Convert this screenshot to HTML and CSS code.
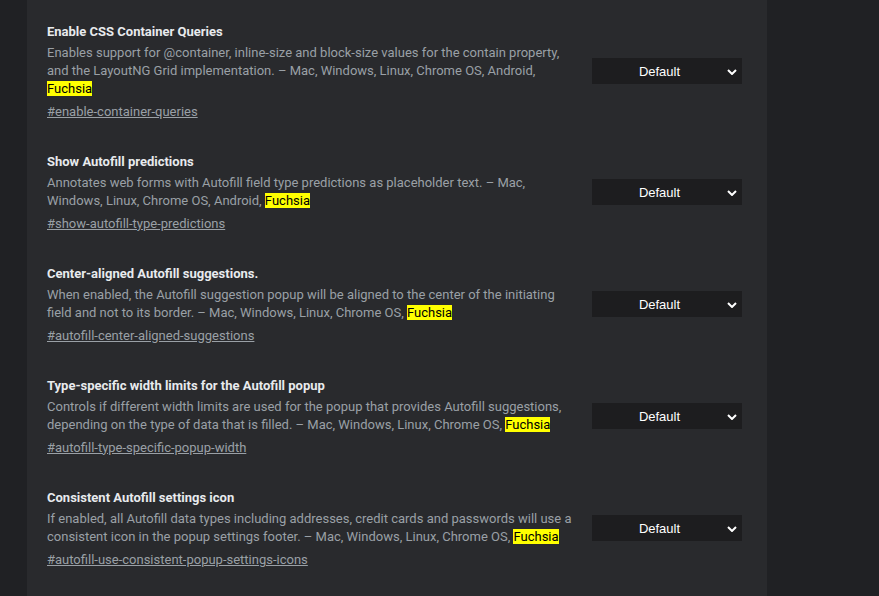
FILE: index.html
```html
<!DOCTYPE html>
<html>
<head>
<meta charset="utf-8">
<link rel="stylesheet" href="styles.css">
</head>
<body>
<div class="panel">
  <div class="experiment">
    <div class="info">
      <div class="name">Enable CSS Container Queries</div>
      <p class="desc">Enables support for @container, inline-size and block-size values for the contain property, and the LayoutNG Grid implementation. – Mac, Windows, Linux, Chrome OS, Android, <mark>Fuchsia</mark></p>
      <a class="perma" href="#">#enable-container-queries</a>
    </div>
    <div class="select"><span>Default</span><svg class="chev" viewBox="0 0 10 6" width="10" height="6"><path d="M1 1l4 4 4-4" fill="none" stroke="#fff" stroke-width="2"/></svg></div>
  </div>
  <div class="experiment">
    <div class="info">
      <div class="name">Show Autofill predictions</div>
      <p class="desc">Annotates web forms with Autofill field type predictions as placeholder text. – Mac, Windows, Linux, Chrome OS, Android, <mark>Fuchsia</mark></p>
      <a class="perma" href="#">#show-autofill-type-predictions</a>
    </div>
    <div class="select"><span>Default</span><svg class="chev" viewBox="0 0 10 6" width="10" height="6"><path d="M1 1l4 4 4-4" fill="none" stroke="#fff" stroke-width="2"/></svg></div>
  </div>
  <div class="experiment">
    <div class="info">
      <div class="name">Center-aligned Autofill suggestions.</div>
      <p class="desc">When enabled, the Autofill suggestion popup will be aligned to the center of the initiating field and not to its border. – Mac, Windows, Linux, Chrome OS, <mark>Fuchsia</mark></p>
      <a class="perma" href="#">#autofill-center-aligned-suggestions</a>
    </div>
    <div class="select"><span>Default</span><svg class="chev" viewBox="0 0 10 6" width="10" height="6"><path d="M1 1l4 4 4-4" fill="none" stroke="#fff" stroke-width="2"/></svg></div>
  </div>
  <div class="experiment">
    <div class="info">
      <div class="name">Type-specific width limits for the Autofill popup</div>
      <p class="desc">Controls if different width limits are used for the popup that provides Autofill suggestions, depending on the type of data that is filled. – Mac, Windows, Linux, Chrome OS, <mark>Fuchsia</mark></p>
      <a class="perma" href="#">#autofill-type-specific-popup-width</a>
    </div>
    <div class="select"><span>Default</span><svg class="chev" viewBox="0 0 10 6" width="10" height="6"><path d="M1 1l4 4 4-4" fill="none" stroke="#fff" stroke-width="2"/></svg></div>
  </div>
  <div class="experiment">
    <div class="info">
      <div class="name">Consistent Autofill settings icon</div>
      <p class="desc">If enabled, all Autofill data types including addresses, credit cards and passwords will use a consistent icon in the popup settings footer. – Mac, Windows, Linux, Chrome OS, <mark>Fuchsia</mark></p>
      <a class="perma" href="#">#autofill-use-consistent-popup-settings-icons</a>
    </div>
    <div class="select"><span>Default</span><svg class="chev" viewBox="0 0 10 6" width="10" height="6"><path d="M1 1l4 4 4-4" fill="none" stroke="#fff" stroke-width="2"/></svg></div>
  </div>
</div>
</body>
</html>
```
FILE: styles.css
```css
html, body {
  margin: 0;
  padding: 0;
  background: #202124;
  height: 100%;
}
body {
  font-family: Roboto, "Noto Sans", sans-serif;
  font-size: 13px;
  overflow: hidden;
}
.panel {
  margin-left: 27px;
  width: 740px;
  min-height: 100%;
  background: #292a2d;
  padding: 6px 25px 0 20px;
  box-sizing: border-box;
}
.experiment {
  display: flex;
  align-items: center;
  padding: 15.5px 0;
}
.info {
  flex: 0 0 528px;
}
.name {
  color: #e8eaed;
  font-weight: 700;
  line-height: 19px;
}
.desc {
  margin: 3.5px 0;
  color: #9aa0a6;
  line-height: 18px;
}
mark {
  background: #ffff00;
  color: #000;
}
.perma {
  display: block;
  color: #9aa0a6;
  text-decoration: underline;
  line-height: 19px;
}
.select {
  margin-left: auto;
  width: 150px;
  height: 26px;
  background: #1d1d1f;
  display: flex;
  align-items: center;
  box-sizing: border-box;
  padding: 0 5px 0 0;
  font-family: "Liberation Sans", Arial, sans-serif;
  font-size: 13px;
  color: #fff;
}
.select span {
  flex: 1;
  text-align: center;
}
.chev {
  display: block;
  margin-top: 1px;
}
```
